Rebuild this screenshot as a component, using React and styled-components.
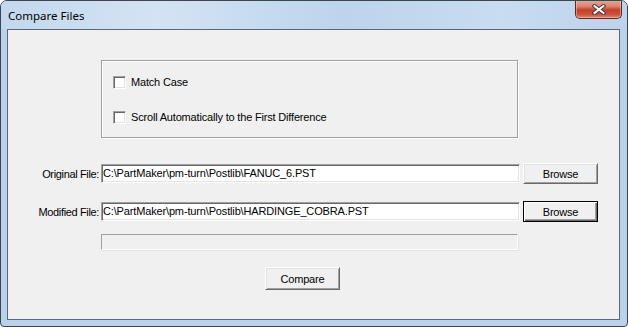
import React from 'react';
import styled, { createGlobalStyle } from 'styled-components';

const GlobalStyle = createGlobalStyle`
  html, body {
    margin: 0;
    padding: 0;
    background: #ffffff;
  }
  body {
    font-family: "Liberation Sans", Arial, sans-serif;
  }
`;

// classic win32 sunken edge
const sunken = `
  border-top: 1px solid #a0a0a0;
  border-left: 1px solid #a0a0a0;
  border-right: 1px solid #ffffff;
  border-bottom: 1px solid #ffffff;
  box-shadow: inset 1px 1px 0 #696969, inset -1px -1px 0 #e3e3e3;
`;

const Window = styled.div`
  box-sizing: border-box;
  width: 628px;
  height: 327px;
  border: 1px solid #3d4550;
  border-radius: 7px 7px 4px 4px;
  background: linear-gradient(180deg, #c7dbf0 0px, #bcd3ec 20px, #b9d1ea 40px, #b9d1ea 100%);
  display: flex;
  flex-direction: column;
  overflow: hidden;
`;

const TitleBar = styled.div`
  height: 28px;
  display: flex;
  justify-content: space-between;
  align-items: flex-start;
  padding: 0 5px 0 7px;
  background: linear-gradient(90deg, #c3d8ee 0%, #d3e3f3 25%, #bdd4ec 55%, #c9dcf0 80%, #bcd3eb 100%);
`;

const Title = styled.span`
  font-family: "Noto Sans", "Open Sans", sans-serif;
  font-size: 11.5px;
  line-height: 14px;
  margin-top: 8px;
  color: #000000;
`;

const CloseButton = styled.div`
  box-sizing: border-box;
  width: 47px;
  height: 19px;
  margin-top: -1px;
  border: 1px solid #5a2a22;
  border-top: none;
  border-radius: 0 0 5px 5px;
  background: linear-gradient(180deg, #e9a898 0%, #dc8470 35%, #c4402a 55%, #c9523a 80%, #dc8a70 100%);
  box-shadow: inset 0 0 0 1px rgba(255, 220, 210, 0.45);
  display: flex;
  align-items: center;
  justify-content: center;
`;

const Client = styled.div`
  box-sizing: border-box;
  flex: 1;
  margin: 0 7px 6px 6px;
  border: 1px solid #5b6676;
  background: #f0f0f0;
  padding-top: 30px;
  display: flex;
  flex-direction: column;
`;

const GroupBox = styled.div`
  box-sizing: border-box;
  margin-left: 93px;
  width: 417px;
  height: 78px;
  border: 1px solid #a0a0a0;
  box-shadow: inset 1px 1px 0 #ffffff, 1px 1px 0 #ffffff;
  padding: 15px 0 0 11px;
  display: flex;
  flex-direction: column;
  gap: 22px;
`;

const CheckRow = styled.label`
  display: flex;
  align-items: center;
  gap: 5px;
  height: 13px;
`;

const CheckBox = styled.span`
  box-sizing: border-box;
  width: 13px;
  height: 13px;
  background: #ffffff;
  ${sunken}
`;

const CheckLabel = styled.span`
  font-size: 11px;
  letter-spacing: -0.18px;
  line-height: 13px;
  color: #000000;
`;

const FileRows = styled.div`
  margin-top: 25px;
  display: flex;
  flex-direction: column;
  gap: 17px;
`;

const FileRow = styled.div`
  display: grid;
  grid-template-columns: 90px 419px 75px;
  column-gap: 3px;
  align-items: center;
  height: 21px;
`;

const FieldLabel = styled.span`
  font-size: 11px;
  letter-spacing: -0.35px;
  text-align: right;
  margin-right: -1px;
  color: #000000;
`;

const PathField = styled.div`
  box-sizing: border-box;
  height: 19px;
  padding: 2px 1px;
  background: #ffffff;
  ${sunken}
  font-size: 11px;
  letter-spacing: -0.15px;
  line-height: 13px;
  white-space: nowrap;
  overflow: hidden;
  color: #000000;
`;

const PushButton = styled.div`
  box-sizing: border-box;
  width: 75px;
  height: ${({ $height }) => $height}px;
  background: #f0f0f0;
  border: 1px solid ${({ $default }) => ($default ? '#000000' : '#ffffff')};
  border-right-color: ${({ $default }) => ($default ? '#000000' : '#696969')};
  border-bottom-color: ${({ $default }) => ($default ? '#000000' : '#696969')};
  box-shadow: ${({ $default }) =>
    $default
      ? 'inset 1px 1px 0 #ffffff, inset -1px -1px 0 #696969, inset -2px -2px 0 #a0a0a0'
      : 'inset 1px 1px 0 #e3e3e3, inset -1px -1px 0 #a0a0a0'};
  display: flex;
  align-items: center;
  justify-content: center;
  font-size: 11px;
  letter-spacing: -0.2px;
  color: #000000;
`;

const ProgressBar = styled.div`
  box-sizing: border-box;
  margin: 12px 0 0 93px;
  width: 417px;
  height: 16px;
  border: 1px solid #a0a0a0;
  border-right-color: #ffffff;
  border-bottom-color: #ffffff;
  box-shadow: 1px 1px 0 #e3e3e3;
`;

const CompareSlot = styled.div`
  margin: 17px 0 0 257px;
`;

const CloseIcon = () => (
  <svg width="14" height="11" viewBox="0 0 14 11">
    <path d="M2.5 2 L11.5 9 M11.5 2 L2.5 9" stroke="#3b3b3b" strokeWidth="4" strokeLinecap="square" />
    <path d="M2.5 2 L11.5 9 M11.5 2 L2.5 9" stroke="#ffffff" strokeWidth="2" strokeLinecap="square" />
  </svg>
);

const Option = ({ label }) => (
  <CheckRow>
    <CheckBox />
    <CheckLabel>{label}</CheckLabel>
  </CheckRow>
);

const FilePicker = ({ label, value, isDefault }) => (
  <FileRow>
    <FieldLabel>{label}</FieldLabel>
    <PathField>{value}</PathField>
    <PushButton $height={21} $default={isDefault}>
      Browse
    </PushButton>
  </FileRow>
);

const App = () => {
  return (
    <>
      <GlobalStyle />
      <Window>
        <TitleBar>
          <Title>Compare Files</Title>
          <CloseButton>
            <CloseIcon />
          </CloseButton>
        </TitleBar>
        <Client>
          <GroupBox>
            <Option label="Match Case" />
            <Option label="Scroll Automatically to the First Difference" />
          </GroupBox>
          <FileRows>
            <FilePicker label="Original File:" value="C:\PartMaker\pm-turn\Postlib\FANUC_6.PST" />
            <FilePicker
              label="Modified File:"
              value="C:\PartMaker\pm-turn\Postlib\HARDINGE_COBRA.PST"
              isDefault
            />
          </FileRows>
          <ProgressBar />
          <CompareSlot>
            <PushButton $height={23}>Compare</PushButton>
          </CompareSlot>
        </Client>
      </Window>
    </>
  );
};

export default App;
